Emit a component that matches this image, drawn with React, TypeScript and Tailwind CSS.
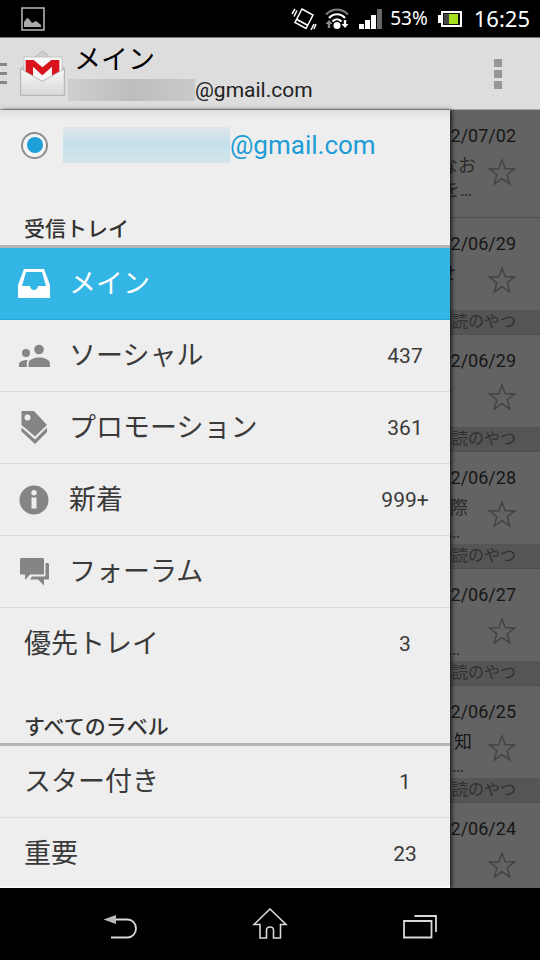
import { useState } from "react";

type Item = {
	label: string;
	count?: string;
	icon?: React.ReactNode;
};

type Message = {
	date: string;
	subject?: string;
	subjectClass?: string;
	snippet?: string;
	snippetClass?: string;
	tag?: string;
};

const inboxItems: Item[] = [
	{ label: "メイン", icon: <InboxIcon /> },
	{ label: "ソーシャル", count: "437", icon: <PeopleIcon /> },
	{ label: "プロモーション", count: "361", icon: <TagIcon /> },
	{ label: "新着", count: "999+", icon: <InfoIcon /> },
	{ label: "フォーラム", icon: <ForumIcon /> },
	{ label: "優先トレイ", count: "3" },
];

const labelItems: Item[] = [
	{ label: "スター付き", count: "1" },
	{ label: "重要", count: "23" },
];

const messages: Message[] = [
	{
		date: "2/07/02",
		subject: "なお",
		subjectClass: "pr-3 text-[#2b2b2b]",
		snippet: "を…",
		snippetClass: "pr-4",
	},
	{
		date: "2/06/29",
		subject: "せ",
		subjectClass: "pr-8 text-[#161616]",
		tag: "読のやつ",
	},
	{ date: "2/06/29", tag: "読のやつ" },
	{
		date: "2/06/28",
		subject: "際",
		subjectClass: "pr-5 text-[#2b2b2b]",
		snippet: "…",
		snippetClass: "pr-7",
		tag: "読のやつ",
	},
	{ date: "2/06/27", snippet: "…", snippetClass: "pr-7", tag: "読のやつ" },
	{
		date: "2/06/25",
		subject: "知",
		subjectClass: "pr-4 text-[#161616]",
		snippet: "…",
		snippetClass: "pr-6",
		tag: "読のやつ",
	},
	{ date: "2/06/24" },
];

function InboxIcon() {
	return (
		<svg viewBox="0 0 32 29" className="w-8" fill="currentColor">
			<path
				fillRule="evenodd"
				d="M6 0h20l6 16v13H0V16zM8 3 4 17h8c0 2 2 4 4 4s4-2 4-4h8L24 3z"
			/>
		</svg>
	);
}

function PeopleIcon() {
	return (
		<svg viewBox="0 0 32 24" className="w-8" fill="currentColor">
			<circle cx="21" cy="5.500" r="4.800" />
			<circle cx="8" cy="9" r="4" />
			<path d="M10.500 23v-3.500c0-3.500 5-6 10.700-6s10.700 2.500 10.700 6V23zM1 23v-2.500C1 18 4.500 16 9.800 16 9 17 8.800 18.300 8.800 19.500V23z" />
		</svg>
	);
}

function TagIcon() {
	return (
		<svg viewBox="0 0 32 34" className="w-8" fill="currentColor">
			<path
				fillRule="evenodd"
				d="M3.500 0H16l13 14-12 11.500L3.500 14zM9.500 3.500a3 3 0 1 0 0 6 3 3 0 0 0 0-6z"
			/>
			<path d="m3.500 16.500 13.500 12 12-12v4.500L17 33 3.500 20.500z" />
		</svg>
	);
}

function InfoIcon() {
	return (
		<svg viewBox="0 0 32 32" className="w-8" fill="currentColor">
			<path
				fillRule="evenodd"
				d="M16 1.500a14.500 14.500 0 1 0 0 29 14.500 14.500 0 0 0 0-29zM16 6a2.700 2.700 0 1 1 0 5.400A2.700 2.700 0 0 1 16 6zM13.500 13.500h5v11h-5z"
			/>
		</svg>
	);
}

function ForumIcon() {
	return (
		<svg viewBox="0 0 32 30" className="w-8" fill="currentColor">
			<path d="M3.500 1h21c1 0 1.500.5 1.500 1.500V16c0 1-.5 1.500-1.500 1.500H12L7 23v-5.500H3.500C2.500 17.500 2 17 2 16V2.500C2 1.500 2.500 1 3.500 1z" />
			<path d="M27.500 6h2c1 0 1.500.5 1.500 1.500V21c0 1-.5 1.500-1.500 1.500H26V28.500l-6-6h-8L14 19.500h12c1 0 1.500-.5 1.500-1.500z" />
		</svg>
	);
}

function GmailLogo() {
	return (
		<svg viewBox="60 150 138 141" className="w-[46px]">
			<defs>
				<linearGradient id="front" x1="0" y1="0" x2="0" y2="1">
					<stop offset="0" stopColor="#f8f8f8" />
					<stop offset="1" stopColor="#d8d8d8" />
				</linearGradient>
			</defs>
			<path d="M62 206 127 153l66 53v30H62z" fill="#cfcfcf" stroke="#a5a5a5" strokeWidth="2" />
			<path d="M72 171h114v60l-58 30-56-30z" fill="#f7f7f7" stroke="#b5b5b5" strokeWidth="2" />
			<path d="M77 180h24l26 22 27-22h24v60h-22v-40l-29 26-28-26v40H77z" fill="#d8131b" />
			<path d="m62 206 65 38 66-38v80H62z" fill="url(#front)" stroke="#999" strokeWidth="2" />
			<path d="m63 285 50-49M192 285l-50-49" stroke="#dcdcdc" strokeWidth="1.500" />
		</svg>
	);
}

function StatusBar() {
	return (
		<div className="flex h-[38px] shrink-0 items-center border-b border-[#777] bg-black pr-2.5 pl-[21px] text-white font-['Noto_Sans',sans-serif]">
			<svg viewBox="0 0 24 24" className="w-6">
				<path d="M1 1h22v22H1z" fill="none" stroke="#bbb" strokeWidth="1.500" />
				<path d="M3 20v-5l3-4 2 1 3 4 4-2 5 4v2z" fill="#aaa" />
			</svg>
			<svg viewBox="0 0 26 24" className="ml-auto w-[26px]" fill="none" stroke="#fff" strokeWidth="1.500">
				<path d="m11 2 11 6-7 13.500L4 15.500zM6 12.500l11 6M1 7l3-5M3 9.500l3-6M20 23l3-6M23 22l2-5" />
			</svg>
			<svg viewBox="0 0 24 22" className="ml-2 w-6" fill="none" strokeWidth="2.200">
				<path d="M1 6.500C7 0 17 0 23 6.500" stroke="#777" />
				<path d="M4 10c4.500-5 11.500-5 16 0M7.500 13.500c2.500-3 6.500-3 9 0" stroke="#fff" />
				<circle cx="12" cy="17.500" r="3.500" fill="#fff" />
				<path d="m4 12 3.500 4H5.200v4H2.800v-4H.5z" fill="#888" />
				<path d="m20 20 3.500-4h-2.300v-4h-2.400v4h-2.300z" fill="#fff" />
			</svg>
			<svg viewBox="0 0 24 20" className="ml-2.5 w-6" fill="#fff">
				<path d="M0 15h5v5H0zM6 11h5v9H6zM12 6h5v14h-5z" />
				<path d="M18 0h5v20h-5z" fill="#666" />
			</svg>
			<span className="ml-[7px] text-[19px]">53%</span>
			<svg viewBox="0 0 24 16" className="ml-2.5 w-6">
				<path d="M4 1h19v14H4z" fill="#111" stroke="#fff" strokeWidth="2" />
				<path d="M0 4h3v8H0z" fill="#fff" />
				<path d="M6 3h5v10H6z" fill="#444" />
				<path d="M11 3h9v10h-9z" fill="#a4e01c" />
			</svg>
			<span className="ml-3 text-[22px]">16:25</span>
		</div>
	);
}

function Header() {
	return (
		<header className="flex h-[72px] shrink-0 items-center border-b border-[#a8a8a8] bg-[#dddddd] pr-[38px]">
			<button type="button" aria-label="ナビゲーション" className="flex w-[7px] flex-col gap-1.5">
				<span className="h-[3px] bg-[#86868c]" />
				<span className="h-[3px] bg-[#86868c]" />
				<span className="h-[3px] bg-[#86868c]" />
			</button>
			<div className="ml-[13px]">
				<GmailLogo />
			</div>
			<div className="ml-0.5 flex-1 text-black">
				<h1 className="pl-1.5 text-[27px] leading-8">メイン</h1>
				<div className="flex h-7 items-center text-[21px] leading-7 text-[#222]">
					<span className="h-[22px] w-[127px] bg-linear-to-r from-[#cfcfcf] via-[#bdbdbd] to-[#cacaca]" />
					@gmail.com
				</div>
			</div>
			<button type="button" aria-label="メニュー" className="flex flex-col gap-[3px]">
				<span className="size-2 bg-[#969696]" />
				<span className="size-2 bg-[#969696]" />
				<span className="size-2 bg-[#969696]" />
			</button>
		</header>
	);
}

function Section({ title }: { title: string }) {
	return (
		<h2 className="flex h-[66px] shrink-0 items-end border-b-3 border-[#b4b4b4] pb-0.5 pl-6 text-[21px] leading-7 font-medium text-[#333]">
			{title}
		</h2>
	);
}

function DrawerRow({
	item,
	selected,
	onSelect,
}: {
	item: Item;
	selected: boolean;
	onSelect: () => void;
}) {
	return (
		<a
			href="#"
			onClick={onSelect}
			className={`flex h-[72px] shrink-0 items-center border-b ${
				selected
					? "border-[#25a5d8] bg-[#33b5e5] text-white"
					: "border-[#dadada] text-[#3a3a3a] last:border-transparent"
			}`}
		>
			{item.icon ? (
				<span
					className={`mr-[19px] ml-[18px] w-8 ${
						selected ? "text-white" : "text-[#858585]"
					}`}
				>
					{item.icon}
				</span>
			) : (
				<span className="w-6" />
			)}
			<span className="flex-1 pt-0.5 text-[27px]">{item.label}</span>
			<span className="w-[90px] pt-0.5 text-center text-[21px]">{item.count}</span>
		</a>
	);
}

function MessageList() {
	return (
		<div className="flex-1 overflow-hidden bg-[#636363] text-lg">
			{messages.map((m, i) => (
				<div key={i} className="border-b border-[#4f4f4f]">
					<div className={`pt-3 ${m.tag ? "h-[92px]" : "h-[107px]"}`}>
						<div className="flex justify-end pr-6 leading-7 text-[#161616]">
							{m.date}
						</div>
						<div className="mt-1 flex justify-end pr-6">
							<div className="flex flex-col items-end leading-6 whitespace-nowrap text-[#2b2b2b]">
								<span className={`h-6 ${m.subjectClass ?? ""}`}>{m.subject}</span>
								<span className={`h-6 ${m.snippetClass ?? ""}`}>{m.snippet}</span>
							</div>
							<button type="button" aria-label="スター" className="mt-1 h-7 w-7 shrink-0">
								<svg viewBox="0 0 28 28" fill="none" stroke="#424242" strokeWidth="1.400">
									<path d="M14 2l3.200 8.700 9.300.3-7.300 5.700 2.600 9.300-7.800-5.300L6.200 26l2.600-9.300L1.500 11l9.300-.3z" />
								</svg>
							</button>
						</div>
					</div>
					{m.tag && (
						<div className="flex h-6 items-center justify-end bg-[#555] pr-6 text-base whitespace-nowrap text-[#303030]">
							{m.tag}
						</div>
					)}
				</div>
			))}
		</div>
	);
}

function NavBar() {
	return (
		<nav className="flex h-[72px] shrink-0 items-center justify-center bg-black pt-1 text-[#d8d8d8]">
			<button type="button" aria-label="戻る" className="flex w-[150px] justify-center">
				<svg viewBox="0 0 36 36" className="w-9" fill="none" stroke="currentColor" strokeWidth="1.800">
					<path d="M13 11.500h12.500a8.500 9 0 0 1 0 18H9" />
					<path d="M1.500 11.500 14 7v9z" fill="#bbb" stroke="none" />
				</svg>
			</button>
			<button type="button" aria-label="ホーム" className="flex w-[150px] justify-center">
				<svg viewBox="0 0 36 36" className="w-9" fill="none" stroke="currentColor" strokeWidth="1.600">
					<path d="M18 1 34 16.500h-5.500V30H21.500v-8c0-4-7-4-7 0v8H8V16.500H2z" />
				</svg>
			</button>
			<button type="button" aria-label="最近のアプリ" className="flex w-[150px] justify-center">
				<svg viewBox="0 0 36 36" className="w-9" fill="none" stroke="currentColor" strokeWidth="1.800">
					<path d="M2 13h27.500v16.500H2zM12.500 8H34v16" />
				</svg>
			</button>
		</nav>
	);
}

export default function App() {
	const [selected, setSelected] = useState("メイン");

	const renderItem = (item: Item) => (
		<DrawerRow
			key={item.label}
			item={item}
			selected={item.label === selected}
			onSelect={() => setSelected(item.label)}
		/>
	);

	return (
		<div
			lang="ja"
			className="flex h-screen flex-col overflow-hidden font-[Roboto,'Noto_Sans_CJK_JP',sans-serif]"
		>
			<StatusBar />
			<Header />
			<main className="flex min-h-0 flex-1">
				<aside className="z-10 flex w-5/6 flex-col overflow-hidden border-b-2 border-[#fafafa] bg-[#eeeeee] shadow-[2px_0_4px_rgba(0,0,0,0.7)]">
					<label className="flex h-[72px] shrink-0 items-center bg-linear-to-b from-[#dfdfdf] to-[#eeeeee] to-15% pb-0.5 pl-[21px] text-[26px] text-[#1d9dd6]">
						<input
							type="radio"
							name="account"
							defaultChecked
							className="grid size-[27px] appearance-none place-content-center rounded-full border-2 border-[#8d8d8d] bg-[#f4f4f4] before:size-4 before:rounded-full checked:before:bg-[#1e9fd8]"
						/>
						<span className="ml-[15px] h-9 w-[167px] bg-linear-to-b from-[#dfe7ea] via-[#c4e0eb] to-[#d5e5eb]" />
						@gmail.com
					</label>
					<Section title="受信トレイ" />
					<div className="flex flex-col">{inboxItems.map(renderItem)}</div>
					<Section title="すべてのラベル" />
					<div className="flex flex-col">{labelItems.map(renderItem)}</div>
				</aside>
				<MessageList />
			</main>
			<NavBar />
		</div>
	);
}
